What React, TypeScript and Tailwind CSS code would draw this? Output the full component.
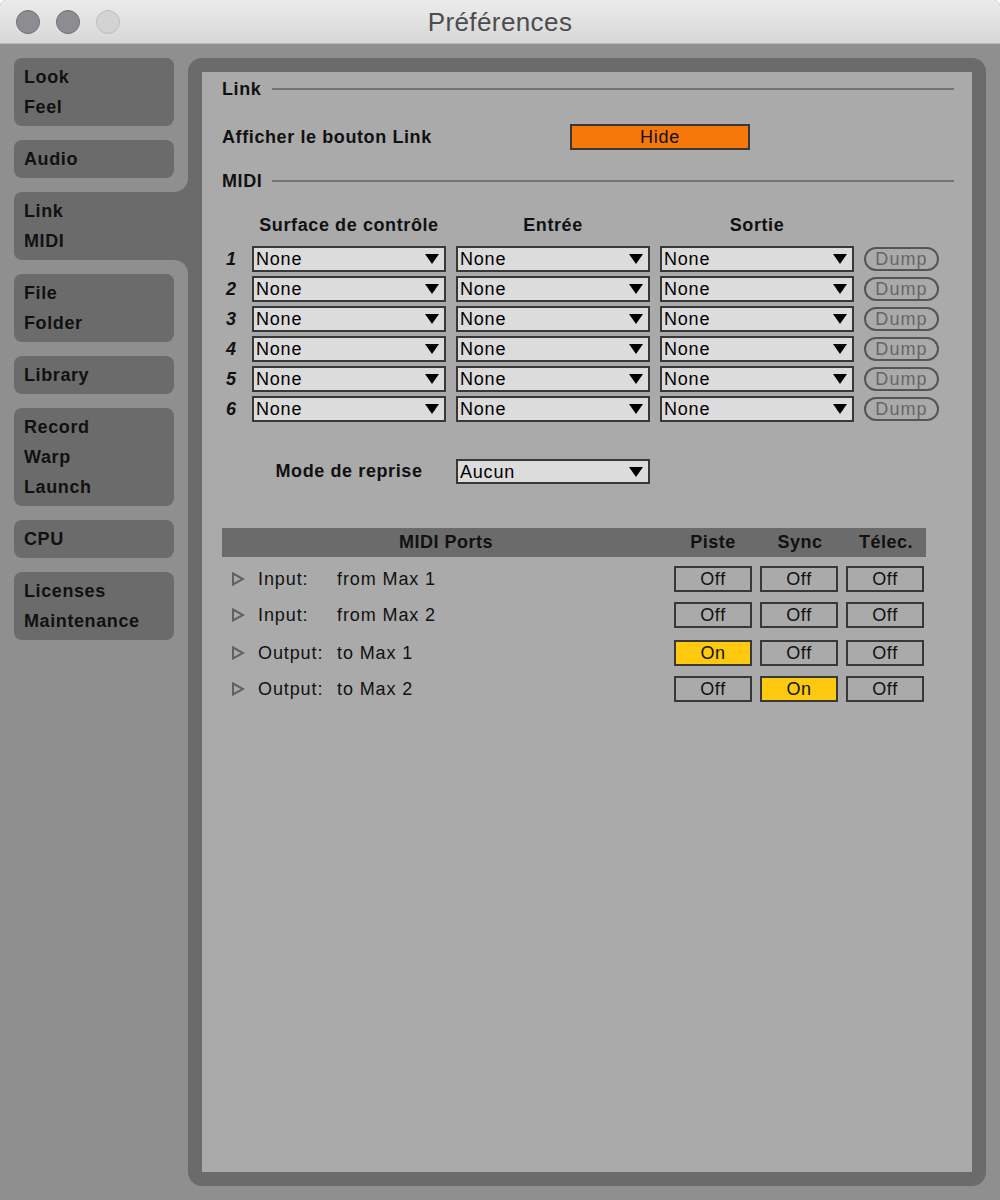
import React from "react";

const FONT = { fontFamily: '"Liberation Sans", Arial, sans-serif' };

const Tri = () => (
  <svg width="14" height="10" viewBox="0 0 14 10" className="shrink-0">
    <polygon points="0,0 14,0 7,10" fill="#000" />
  </svg>
);

function Dropdown({ value, h = "h-[26px]" }: { value: string; h?: string }) {
  return (
    <div
      className={
        "flex w-[194px] items-center justify-between border-2 border-[#383838] bg-[#dcdcdc] pl-[2px] pr-[5px] " + h
      }
    >
      <span className="text-[18px] leading-none tracking-[0.8px] text-black">{value}</span>
      <Tri />
    </div>
  );
}

function Tab({ lines, selected }: { lines: string[]; selected?: boolean }) {
  if (selected) {
    return (
      <div className="relative w-[174px] rounded-l-[8px] bg-[#6b6b6b] py-[4px] pl-[10px]">
        <div className="absolute -top-[14px] right-0 h-[14px] w-[14px] bg-[#6b6b6b]">
          <div className="h-full w-full rounded-br-[14px] bg-[#8f8f8f]" />
        </div>
        <div className="absolute -bottom-[14px] right-0 h-[14px] w-[14px] bg-[#6b6b6b]">
          <div className="h-full w-full rounded-tr-[14px] bg-[#8f8f8f]" />
        </div>
        {lines.map((l) => (
          <div key={l} className="h-[30px] text-[18px] font-bold leading-[31px] tracking-[0.6px] text-[#111]">
            {l}
          </div>
        ))}
      </div>
    );
  }
  return (
    <div className="w-[160px] rounded-[8px] bg-[#6b6b6b] py-[4px] pl-[10px]">
      {lines.map((l) => (
        <div key={l} className="h-[30px] text-[18px] font-bold leading-[31px] tracking-[0.6px] text-[#111]">
          {l}
        </div>
      ))}
    </div>
  );
}

function SectionHeader({ label, mt }: { label: string; mt: string }) {
  return (
    <div className={"flex h-[20px] items-center " + mt}>
      <div className="w-[50px] text-[18px] font-bold tracking-[0.6px] text-[#111]">{label}</div>
      <div className="h-[2px] flex-1 bg-[#737373]" />
    </div>
  );
}

function Toggle({ on }: { on?: boolean }) {
  return (
    <div
      className={
        "ml-[4px] flex h-[26px] w-[78px] items-center justify-center border-2 border-[#383838] " +
        (on ? "bg-[#fec90f]" : "bg-[#aaaaaa]")
      }
    >
      <span className="text-[18px] leading-none tracking-[0.6px] text-[#111]">{on ? "On" : "Off"}</span>
    </div>
  );
}

function PortRow({
  kind,
  name,
  states,
  mt,
}: {
  kind: string;
  name: string;
  states: boolean[];
  mt: string;
}) {
  return (
    <div className={"flex h-[26px] items-center " + mt}>
      <div className="flex w-[448px] items-center">
        <svg width="14" height="14" viewBox="0 0 14 14" className="ml-[9px] mr-[13px]">
          <polygon points="2,1.5 12,7 2,12.5" fill="none" stroke="#626262" strokeWidth="2" />
        </svg>
        <span className="w-[79px] text-[18px] tracking-[0.9px] text-[#111]">{kind}</span>
        <span className="text-[18px] tracking-[0.9px] text-[#111]">{name}</span>
      </div>
      <div className="w-[86px]">
        <Toggle on={states[0]} />
      </div>
      <div className="w-[86px]">
        <Toggle on={states[1]} />
      </div>
      <div className="w-[84px]">
        <Toggle on={states[2]} />
      </div>
    </div>
  );
}

export default function App() {
  const rows = [1, 2, 3, 4, 5, 6];
  return (
    <div style={FONT} className="flex h-[1200px] w-[1000px] flex-col overflow-hidden rounded-t-[6px] bg-[#8f8f8f]">
      {/* Title bar */}
      <div className="relative flex h-[44px] shrink-0 items-center border-b border-[#b8b8b8] bg-gradient-to-b from-[#ececec] to-[#d7d7d7] pl-[16px]">
        <div className="flex items-center gap-[16px]">
          <div className="h-[24px] w-[24px] rounded-full border border-[#707075] bg-[#8d8d91]" />
          <div className="h-[24px] w-[24px] rounded-full border border-[#707075] bg-[#8d8d91]" />
          <div className="h-[24px] w-[24px] rounded-full border border-[#bcbcbc] bg-[#d3d3d3]" />
        </div>
        <div className="absolute inset-x-0 top-0 flex h-[45px] items-center justify-center">
          <span className="text-[26px] tracking-[0.4px] text-[#4d4d4d]">Préférences</span>
        </div>
      </div>

      {/* Body */}
      <div className="flex flex-1 pl-[14px] pt-[14px]">
        {/* Sidebar */}
        <div className="flex w-[174px] flex-col gap-[14px]">
          <Tab lines={["Look", "Feel"]} />
          <Tab lines={["Audio"]} />
          <Tab lines={["Link", "MIDI"]} selected />
          <Tab lines={["File", "Folder"]} />
          <Tab lines={["Library"]} />
          <Tab lines={["Record", "Warp", "Launch"]} />
          <Tab lines={["CPU"]} />
          <Tab lines={["Licenses", "Maintenance"]} />
        </div>

        {/* Frame */}
        <div className="h-[1128px] w-[798px] rounded-[14px] bg-[#6b6b6b] p-[14px]">
          <div className="flex h-full flex-col bg-[#aaaaaa] pl-[20px] pr-[18px]">
            <SectionHeader label="Link" mt="mt-[7px]" />

            <div className="mt-[25px] flex h-[26px] items-center">
              <div className="w-[348px] text-[18px] font-bold tracking-[0.6px] text-[#111]">Afficher le bouton Link</div>
              <div className="flex h-[26px] w-[180px] items-center justify-center border-2 border-[#383838] bg-[#f6770a]">
                <span className="text-[18px] leading-none tracking-[0.8px] text-[#111]">Hide</span>
              </div>
            </div>

            <SectionHeader label="MIDI" mt="mt-[21px]" />

            <div className="mt-[24px] flex h-[20px] items-center pl-[30px]">
              <div className="w-[194px] text-center text-[18px] font-bold tracking-[0.6px] text-[#111]">
                Surface de contrôle
              </div>
              <div className="ml-[10px] w-[194px] text-center text-[18px] font-bold tracking-[0.6px] text-[#111]">
                Entrée
              </div>
              <div className="ml-[10px] w-[194px] text-center text-[18px] font-bold tracking-[0.6px] text-[#111]">
                Sortie
              </div>
            </div>

            <div className="mt-[11px] flex flex-col gap-[4px]">
              {rows.map((n) => (
                <div key={n} className="flex h-[26px] items-center">
                  <div className="w-[30px] pl-[4px] text-[18px] font-bold italic text-[#111]">{n}</div>
                  <Dropdown value="None" />
                  <div className="ml-[10px]">
                    <Dropdown value="None" />
                  </div>
                  <div className="ml-[10px]">
                    <Dropdown value="None" />
                  </div>
                  <div className="ml-[10px] flex h-[24px] w-[75px] items-center justify-center rounded-full border-2 border-[#555555]">
                    <span className="text-[18px] leading-none tracking-[1.1px] text-[#666666]">Dump</span>
                  </div>
                </div>
              ))}
            </div>

            <div className="mt-[37px] flex h-[25px] items-center pl-[30px]">
              <div className="w-[194px] text-center text-[18px] font-bold tracking-[0.6px] text-[#111]">
                Mode de reprise
              </div>
              <div className="ml-[10px]">
                <Dropdown value="Aucun" h="h-[25px]" />
              </div>
            </div>

            <div className="mt-[44px] flex h-[29px] w-[704px] items-center bg-[#6b6b6b]">
              <div className="w-[448px] text-center text-[18px] font-bold tracking-[0.5px] text-[#111]">MIDI Ports</div>
              <div className="w-[86px] text-center text-[18px] font-bold tracking-[0.5px] text-[#111]">Piste</div>
              <div className="w-[86px] pl-[2px] text-center text-[18px] font-bold tracking-[0.5px] text-[#111]">
                Sync
              </div>
              <div className="w-[84px] pl-[4px] text-center text-[18px] font-bold tracking-[0.5px] text-[#111]">
                Télec.
              </div>
            </div>

            <PortRow kind="Input:" name="from Max 1" states={[false, false, false]} mt="mt-[9px]" />
            <PortRow kind="Input:" name="from Max 2" states={[false, false, false]} mt="mt-[10px]" />
            <PortRow kind="Output:" name="to Max 1" states={[true, false, false]} mt="mt-[12px]" />
            <PortRow kind="Output:" name="to Max 2" states={[false, true, false]} mt="mt-[10px]" />
          </div>
        </div>
      </div>
    </div>
  );
}
